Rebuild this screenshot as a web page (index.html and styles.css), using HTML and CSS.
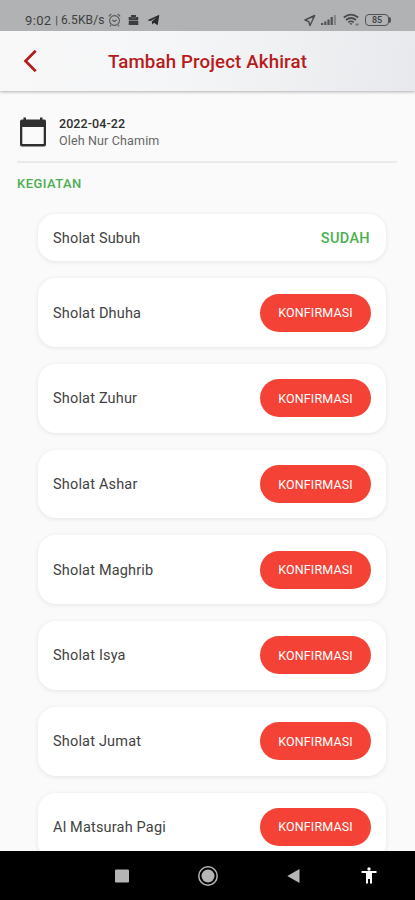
FILE: index.html
```html
<!DOCTYPE html>
<html lang="id">
<head>
<meta charset="utf-8">
<title>Tambah Project Akhirat</title>
<link rel="stylesheet" href="styles.css">
</head>
<body>
<div class="phone">
  <header class="top">
    <div class="status">
      <span class="clock">9:02</span><span class="bar">|</span><span class="speed">6.5KB/s</span>
      <svg class="alarm" width="13" height="14" viewBox="0 0 13 14" fill="none" stroke="#55585a" stroke-width="1.1"><circle cx="6.5" cy="7.5" r="4.9"/><path d="M.7 3.3 3.3 1M12.3 3.3 9.700 1M4.300 7l2.200 1.500L8.700 7M3 12l-1 1.300M10 12l1 1.300"/></svg>
      <svg class="app" width="11" height="12" viewBox="0 0 11 12"><path d="M3 3V1h5v2h2.300v3H.700V3zM.700 7h9.600v4H.700z" fill="#3c3e40"/><path d="M1 6.500h9M3 4h5" stroke="#707274" stroke-width=".8"/></svg>
      <svg class="plane" width="13" height="12" viewBox="0 0 13 12"><path d="M.3 6.300 12.300.7 10.700 11.300 7 8.700 5.300 10.500 4.800 7.500 10 3.200 3.500 7.100z" fill="#282a2c"/></svg>
      <span class="spacer"></span>
      <svg class="loc" width="12" height="13" viewBox="0 0 12 13" fill="none" stroke="#484b4e" stroke-width="1.400" stroke-linejoin="round"><path d="M10.700 1.500 1 6l3.700 1.700L6 11.500z"/></svg>
      <svg class="signal" width="16" height="12" viewBox="0 0 16 12"><path d="M0 9h2.200v2H0zM3.200 7.500h2.200V11H3.200zM6.400 5.500h2.200V11H6.400zM9.600 3h2.200v8H9.600z" fill="#505356"/><path d="M12.800 1H15v10h-2.200z" fill="#85888a"/></svg>
      <svg class="wifi" width="17" height="14" viewBox="0 0 17 14" fill="none" stroke="#484b4e" stroke-width="1.700"><path d="M.8 4.500Q8 -1.300 15.200 4.500M3 7Q8 3 13 7M5.300 9.300Q8 7.200 10.700 9.300"/><path d="M6.300 10.200h3.400L8 12z" fill="#484b4e" stroke="none"/><path d="M12.500 11.500h3" stroke="#74777a" stroke-width="2"/></svg>
      <span class="battery">85</span>
    </div>
    <div class="appbar">
      <svg class="back" width="16" height="24" viewBox="0 0 16 24"><path d="M13.700 1.700 3.500 12l10.200 10.300" fill="none" stroke="#b71c1c" stroke-width="2.700"/></svg>
      <h1>Tambah Project Akhirat</h1>
    </div>
  </header>
  <main>
    <section class="info">
      <svg width="28" height="31" viewBox="0 0 28 31"><path fill="#303030" fill-rule="evenodd" d="M4.500.500h2.500v2h14v-2h2.500v2h2Q27 2.500 27 4.500v23Q27 29.500 25 29.500H3Q1 29.500 1 27.500v-23Q1 2.500 3 2.500h1.500zM3.300 10v17h21.400V10z"/></svg>
      <div><div class="date">2022-04-22</div><div class="author">Oleh Nur Chamim</div></div>
    </section>
    <h2>KEGIATAN</h2>
    <section class="list">
      <article class="card done"><span>Sholat Subuh</span><strong>SUDAH</strong></article>
      <article class="card"><span>Sholat Dhuha</span><button>KONFIRMASI</button></article>
      <article class="card"><span>Sholat Zuhur</span><button>KONFIRMASI</button></article>
      <article class="card"><span>Sholat Ashar</span><button>KONFIRMASI</button></article>
      <article class="card"><span>Sholat Maghrib</span><button>KONFIRMASI</button></article>
      <article class="card"><span>Sholat Isya</span><button>KONFIRMASI</button></article>
      <article class="card"><span>Sholat Jumat</span><button>KONFIRMASI</button></article>
      <article class="card"><span>Al Matsurah Pagi</span><button>KONFIRMASI</button></article>
    </section>
  </main>
  <nav>
    <svg width="14" height="14" viewBox="0 0 14 14"><rect width="14" height="13" y=".5" rx="1" fill="#b5b5b5"/></svg>
    <svg class="home" width="22" height="22" viewBox="0 0 22 22"><circle cx="11" cy="11" r="9.200" fill="none" stroke="#b5b5b5" stroke-width="1.500"/><circle cx="11" cy="11" r="6.500" fill="#b5b5b5"/></svg>
    <svg class="return" width="14" height="16" viewBox="0 0 14 16"><path d="M12.500 1v14L.300 8z" fill="#b5b5b5"/></svg>
    <svg class="access" width="16" height="18" viewBox="0 0 16 18"><circle cx="8" cy="2" r="1.700" fill="#fff"/><path d="M.5 4h15v2H11v10.500H9v-4.500H7v4.500H5V6H.5z" fill="#fff"/></svg>
  </nav>
</div>
</body>
</html>
```

FILE: styles.css
```css
* { box-sizing: border-box; }
body { margin: 0; font-family: Roboto, "Liberation Sans", sans-serif; }
svg { display: block; flex: none; }
.phone { width: 415px; height: 900px; display: flex; flex-direction: column; overflow: hidden; background: #fafafa; }
.top { flex: none; height: 91px; background: linear-gradient(100deg, #f8f8f9 0%, #f5f6f7 40%, #eff1f3 65%, #e7e9ec 100%); box-shadow: 0 1px 3px rgba(0,0,0,.3); z-index: 1; }
.status { height: 31px; padding: 9px 24px 0 25px; display: flex; align-items: center; background: #b1b2b3; color: #3d4042; white-space: nowrap; }
.clock { width: 27px; font-size: 13px; letter-spacing: .35px; }
.bar { width: 9px; font-size: 11px; text-align: center; }
.speed { width: 46px; font-size: 12px; letter-spacing: .1px; }
.alarm { margin-left: 1px; }
.app { margin-left: 7px; }
.plane { margin-left: 8px; }
.spacer { flex: 1; }
.signal { margin-left: 5px; }
.wifi { margin-left: 6px; }
.battery { position: relative; width: 24px; height: 12px; margin: 0 2px 0 5px; border: 1.5px solid #505356; border-radius: 4px; font-size: 9px; font-weight: 500; line-height: 10px; text-align: center; }
.battery::after { content: ""; position: absolute; right: -3px; top: 2px; width: 2px; height: 6px; background: #505356; border-radius: 0 2px 2px 0; }
.appbar { height: 60px; display: grid; grid-template-columns: 46px 1fr 46px; align-items: center; }
.back { margin-left: 22px; }
h1 { margin: 0; padding-top: 1px; color: #b71c1c; font-size: 18.7px; letter-spacing: .13px; line-height: 24px; font-weight: 500; text-align: center; white-space: nowrap; }
main { flex: 1; min-height: 0; padding: 24px 18px 0 17px; overflow: hidden; }
.info { height: 48px; padding-left: 2px; display: flex; gap: 12px; border-bottom: 2px solid #eaeaea; }
.info svg { margin-top: 2px; }
.date, .author { height: 17px; line-height: 17px; font-size: 12.5px; color: #666; }
.date { color: #303030; font-weight: 500; letter-spacing: .08px; }
.author { letter-spacing: .15px; }
h2 { margin: 12px 0 0; height: 17px; line-height: 17px; font-size: 13px; letter-spacing: .42px; font-weight: 500; color: #4caf50; }
.list { padding: 22.4px 11px 0 21px; display: flex; flex-direction: column; gap: 17px; }
.card { flex: none; height: 68.7px; padding: 0 15px; display: flex; align-items: center; justify-content: space-between; background: #fff; border-radius: 18px; box-shadow: 0 1px 5px rgba(0,0,0,.09); color: #424242; font-size: 14.5px; letter-spacing: .18px; }
.card span, .card strong { padding-top: 1px; }
.card.done { height: 47px; }
.card strong { color: #4caf50; font-size: 14.5px; font-weight: 500; letter-spacing: .35px; margin-right: 1px; }
button { width: 111px; height: 38px; padding: 0; border: 0; border-radius: 19px; background: #f44336; color: #fff; font: 400 12.5px Roboto, "Liberation Sans", sans-serif; letter-spacing: .15px; }
nav { flex: none; height: 49px; padding-left: 115px; display: flex; align-items: center; background: #000; }
.home { margin-left: 68px; }
.return { margin-left: 68px; }
.access { margin-left: 60px; }
```
